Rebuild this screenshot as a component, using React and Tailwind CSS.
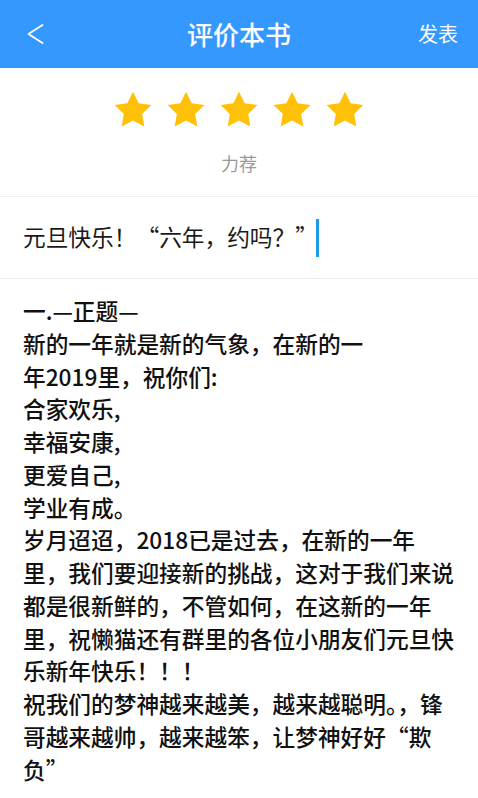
import React from "react";

const Star = () => (
  <svg width="44" height="44" viewBox="0 0 24 24" className="block">
    <path
      d="M12 2l3.09 6.26L22 9.27l-5 4.87 1.18 6.88L12 17.77l-6.18 3.25L7 14.14 2 9.27l6.91-1.01L12 2z"
      fill="#FFC107"
    />
  </svg>
);

const LQ = () => <span className="inline-block w-[1em] text-right">“</span>;
const RQ = () => <span className="inline-block w-[1em] text-left">”</span>;

const lines = [
  "一.—正题—",
  "新的一年就是新的气象，在新的一",
  "年2019里，祝你们:",
  "合家欢乐,",
  "幸福安康,",
  "更爱自己,",
  "学业有成。",
  "岁月迢迢，2018已是过去，在新的一年",
  "里，我们要迎接新的挑战，这对于我们来说",
  "都是很新鲜的，不管如何，在这新的一年",
  "里，祝懒猫还有群里的各位小朋友们元旦快",
  "乐新年快乐！！！",
  "祝我们的梦神越来越美，越来越聪明。，锋",
  <>
    哥越来越帅，越来越笨，让梦神好好<LQ />欺
  </>,
  <>
    负<RQ />
  </>,
];

export default function App() {
  return (
    <div
      className="w-[478px] h-[798px] overflow-hidden bg-white flex flex-col"
      style={{ fontFamily: '"Noto Sans CJK SC", "Noto Sans", sans-serif' }}
    >
      <div className="h-[68px] bg-[#3598FE] flex items-center px-[26px] shrink-0">
        <div className="flex-1">
          <svg width="20" height="24" viewBox="0 0 20 24" className="block">
            <path d="M16.5 3L2.5 12l14 9" fill="none" stroke="white" strokeWidth="1.8" strokeLinecap="round" strokeLinejoin="round" />
          </svg>
        </div>
        <div className="text-white text-[26px] font-medium leading-none">评价本书</div>
        <div className="flex-1 flex justify-end">
          <div className="text-white text-[20px] leading-none -mr-[6px]">发表</div>
        </div>
      </div>

      <div className="flex flex-col items-center h-[129px] border-b border-[#eeeeee] shrink-0">
        <div className="flex gap-[9px] mt-[20px]">
          <Star />
          <Star />
          <Star />
          <Star />
          <Star />
        </div>
        <div className="text-[#999999] text-[18px] leading-none mt-[22px]">力荐</div>
      </div>

      <div className="h-[82px] border-b border-[#eeeeee] flex items-center pl-[23px] shrink-0">
        <span className="text-[#1a1a1a] text-[22.7px] leading-none whitespace-nowrap">
          元旦快乐！<LQ />六年，约吗？<RQ />
        </span>
        <span className="inline-block w-[3px] h-[38px] bg-[#1E9BE0] -ml-[2px]" />
      </div>

      <div className="pt-[16px] pl-[23px] text-[#111111] font-medium text-[22.7px] leading-[32.75px]">
        {lines.map((l, i) => (
          <div key={i} className="whitespace-nowrap">
            {l}
          </div>
        ))}
      </div>
    </div>
  );
}
